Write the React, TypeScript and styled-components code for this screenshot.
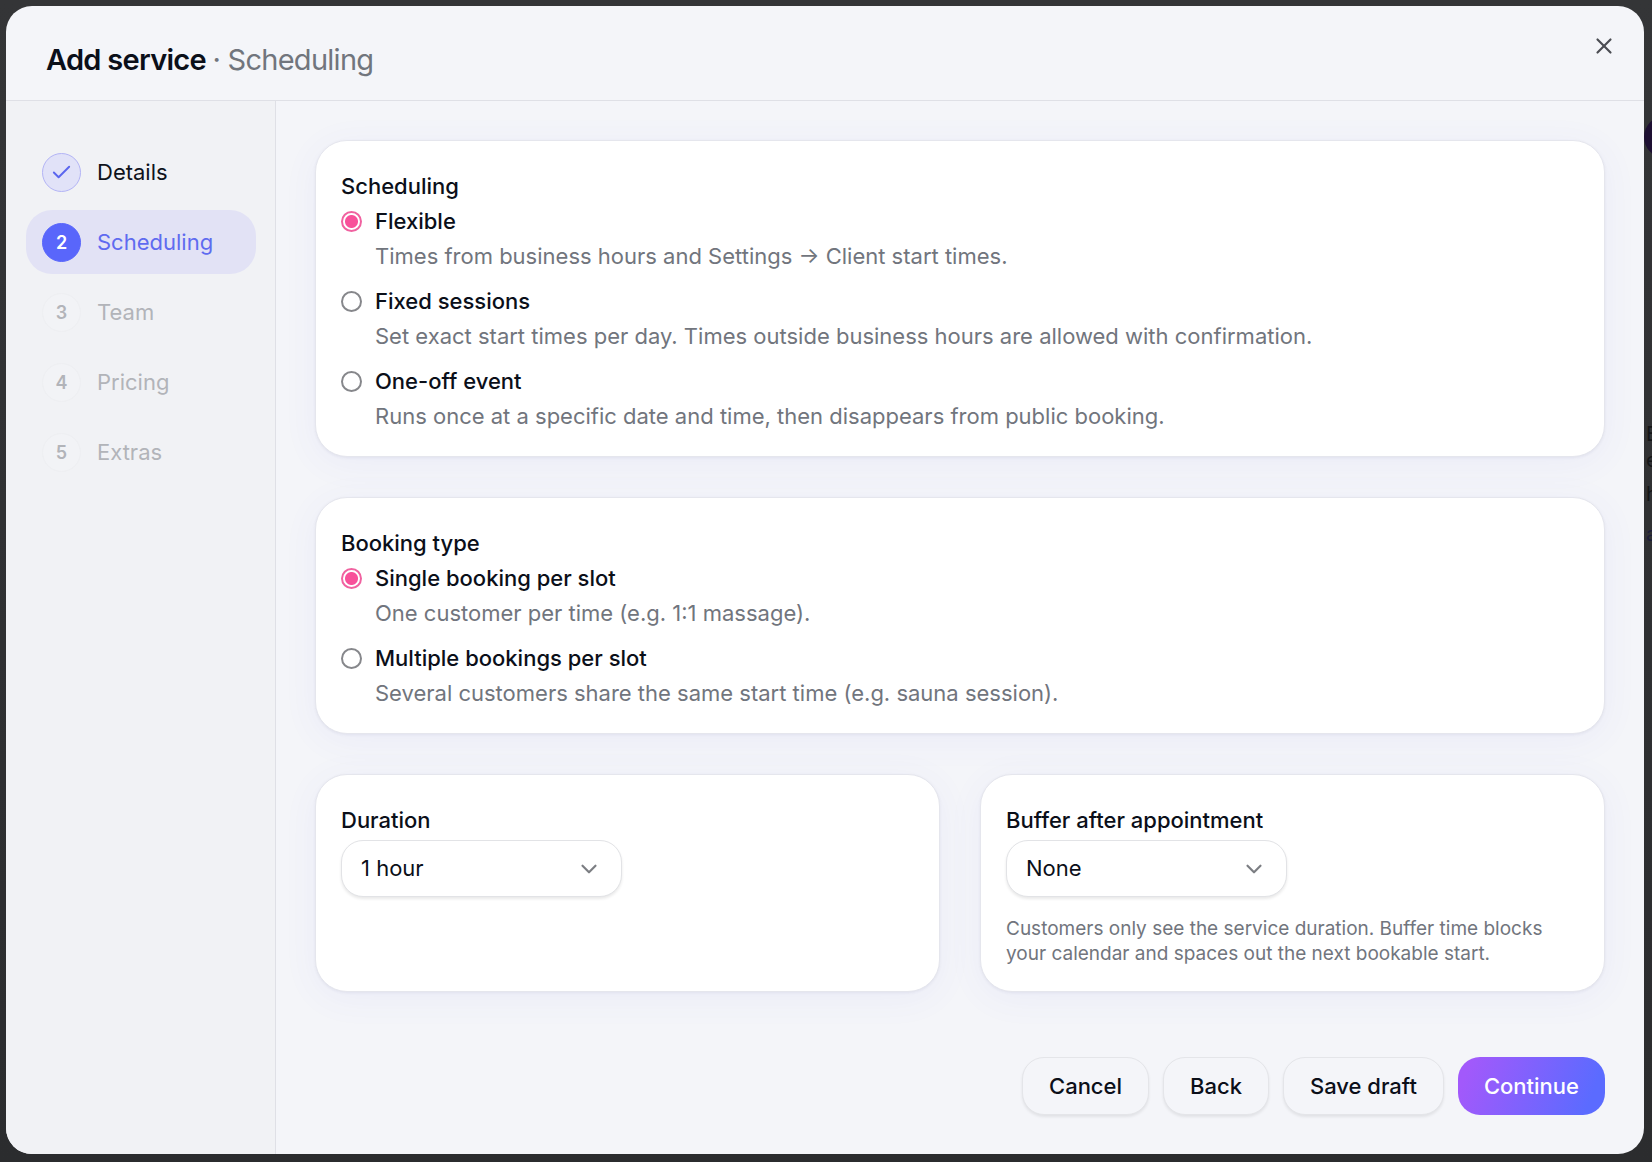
import React, { useState } from "react";
import styled, { createGlobalStyle, css } from "styled-components";
import { Check, ChevronDown, X } from "lucide-react";

const GlobalStyle = createGlobalStyle`
  *, *::before, *::after { box-sizing: border-box; }
  body {
    margin: 0;
    background: #303133;
    color: #0b0f19;
    font-family: Inter, "Liberation Sans", sans-serif;
    font-optical-sizing: none;
    font-size: 22px;
    line-height: 35px;
  }
  button, select, input { font: inherit; color: inherit; }
`;

const Backdrop = styled.div`
  display: grid;
  grid-template-columns: minmax(0, 1fr) 8px;
  min-height: 100vh;
  padding: 6px 0 8px 6px;
  background: linear-gradient(#343537, #2b2c2e);
`;

const PageEdge = styled.div`
  display: flex;
  flex-direction: column;
  overflow: hidden;
  padding-top: 110px;
  color: #151618;
  font-size: 20px;
  white-space: nowrap;
`;

const EdgeAvatar = styled.span`
  flex: none;
  width: 42px;
  height: 42px;
  margin-bottom: 259px;
  border-radius: 50%;
  background: #1e1033;
`;

const EdgeLine = styled.span<{ $height: number; $link?: boolean }>`
  flex: none;
  height: ${(p) => p.$height}px;
  padding-left: 2px;
  color: ${(p) => (p.$link ? "#1d1e3a" : "inherit")};
`;

const Dialog = styled.section`
  display: flex;
  flex-direction: column;
  overflow: hidden;
  border-radius: 26px;
  background: #f4f5f9;
`;

const Header = styled.header`
  display: flex;
  align-items: center;
  justify-content: space-between;
  height: 95px;
  flex: none;
  padding: 14px 24px 0 40px;
  border-bottom: 1px solid #dfe0e6;
`;

const Title = styled.h1`
  margin: 0;
  font-size: 29px;
  line-height: 40px;
  font-weight: 600;
  letter-spacing: -0.025em;

  span {
    color: #71757d;
    font-weight: 400;
  }
`;

const CloseButton = styled.button`
  display: grid;
  place-items: center;
  align-self: flex-start;
  width: 32px;
  height: 32px;
  margin-top: 10px;
  padding: 0;
  border: 0;
  background: none;
  color: #4b4d53;
  cursor: pointer;
`;

const Body = styled.div`
  display: grid;
  grid-template-columns: 270px minmax(0, 1fr);
  flex: 1;
`;

const Steps = styled.nav`
  display: flex;
  flex-direction: column;
  gap: 6px;
  padding: 39px 19px 39px 20px;
  border-right: 1px solid #dfe0e6;
  background: #f1f2f5;
`;

type StepState = "done" | "current" | "upcoming";

const Step = styled.button<{ $state: StepState }>`
  display: flex;
  align-items: center;
  gap: 16px;
  height: 64px;
  padding: 0 16px;
  border: 0;
  border-radius: 26px;
  background: ${(p) => (p.$state === "current" ? "#e2e2f5" : "none")};
  color: ${(p) =>
    p.$state === "current" ? "#5f6bf0" : p.$state === "done" ? "#0f131c" : "#b2b4b9"};
  text-align: left;
  cursor: pointer;
`;

const StepBadge = styled.span<{ $state: StepState }>`
  display: grid;
  place-items: center;
  flex: none;
  width: 39px;
  height: 39px;
  border: 1px solid #eeeff2;
  border-radius: 50%;
  background: #f2f3f6;
  font-size: 18px;
  font-weight: 600;
  ${(p) =>
    p.$state === "current" &&
    css`
      border-color: #5966fb;
      background: #5966fb;
      color: #fff;
    `}
  ${(p) =>
    p.$state === "done" &&
    css`
      border-color: #b3b4f5;
      background: #e1e2f8;
      color: #5b66ee;
    `}
`;

const Content = styled.form`
  display: flex;
  flex-direction: column;
  gap: 40px;
  padding: 39px;
`;

const cardStyle = css`
  margin: 0;
  min-width: 0;
  border: 1px solid #e5e6ed;
  border-radius: 32px;
  background: #fff;
  box-shadow: 0 1px 3px rgba(60, 60, 110, 0.07), 0 6px 36px rgba(90, 90, 220, 0.06);
`;

const Card = styled.div`
  ${cardStyle}
  padding: 28px 25px 22px;
`;

const FieldCard = styled.div`
  ${cardStyle}
  padding: 28px 25px 25px;
`;

const CardPair = styled.div`
  display: grid;
  grid-template-columns: repeat(2, minmax(0, 1fr));
  gap: 40px;
`;

const CardTitle = styled.h2`
  margin: 0;
  font-size: 22px;
  line-height: 35px;
  font-weight: 500;
`;

const Options = styled.div`
  display: flex;
  flex-direction: column;
  gap: 10px;
`;

const Option = styled.label`
  display: grid;
  grid-template-columns: 21px minmax(0, 1fr);
  column-gap: 13px;
  align-items: center;
  cursor: pointer;
`;

const OptionName = styled.span`
  font-weight: 500;
`;

const OptionText = styled.span`
  grid-column: 2;
  color: #71757d;
`;

const Radio = styled.input`
  appearance: none;
  width: 21px;
  height: 21px;
  margin: 0;
  border: 2px solid #86878b;
  border-radius: 50%;
  background: #fff;

  &:checked {
    border: 2px solid #f062a0;
    background: radial-gradient(circle, #f8509a 6px, #fff 7px);
  }
`;

const FieldLabel = styled.label`
  display: block;
  margin-bottom: 2px;
  font-weight: 500;
`;

const SelectBox = styled.div`
  display: grid;
  align-items: center;
  width: 281px;
  max-width: 100%;
  color: #7c7e83;

  > * {
    grid-area: 1 / 1;
  }

  > svg {
    justify-self: end;
    margin-right: 20px;
    pointer-events: none;
  }
`;

const Select = styled.select`
  appearance: none;
  width: 100%;
  height: 57px;
  padding: 0 48px 0 19px;
  border: 1px solid #e2e3e6;
  border-radius: 22px;
  background: #fff;
  box-shadow: 0 2px 3px rgba(0, 0, 0, 0.09);
  color: #0b0f19;
`;

const Hint = styled.p`
  margin: 19px 0 0;
  color: #71757d;
  font-size: 19px;
  line-height: 25px;
`;

const Actions = styled.div`
  display: flex;
  flex-wrap: wrap;
  justify-content: flex-end;
  gap: 14px;
  padding-top: 25px;
`;

const Button = styled.button<{ $primary?: boolean }>`
  height: 58px;
  padding: 0 26px;
  border: 1px solid #e4e5e9;
  border-radius: 22px;
  background: #f4f5f9;
  box-shadow: 0 2px 3px rgba(0, 0, 0, 0.08);
  font-weight: 500;
  cursor: pointer;
  ${(p) =>
    p.$primary &&
    css`
      border: 0;
      background: linear-gradient(110deg, #a259fb 8%, #5b6bff 88%);
      box-shadow: none;
      color: #fff;
    `}
`;

const steps: { name: string; state: StepState }[] = [
  { name: "Details", state: "done" },
  { name: "Scheduling", state: "current" },
  { name: "Team", state: "upcoming" },
  { name: "Pricing", state: "upcoming" },
  { name: "Extras", state: "upcoming" },
];

const scheduling = [
  ["Flexible", "Times from business hours and Settings → Client start times."],
  ["Fixed sessions", "Set exact start times per day. Times outside business hours are allowed with confirmation."],
  ["One-off event", "Runs once at a specific date and time, then disappears from public booking."],
];

const bookingTypes = [
  ["Single booking per slot", "One customer per time (e.g. 1:1 massage)."],
  ["Multiple bookings per slot", "Several customers share the same start time (e.g. sauna session)."],
];

function RadioCard({ title, name, options }: { title: string; name: string; options: string[][] }) {
  const [selected, setSelected] = useState(0);
  return (
    <Card role="radiogroup" aria-labelledby={`${name}-title`}>
      <CardTitle id={`${name}-title`}>{title}</CardTitle>
      <Options>
        {options.map(([label, text], i) => (
          <Option key={label}>
            <Radio type="radio" name={name} checked={selected === i} onChange={() => setSelected(i)} />
            <OptionName>{label}</OptionName>
            <OptionText>{text}</OptionText>
          </Option>
        ))}
      </Options>
    </Card>
  );
}

function SelectField({ id, label, options }: { id: string; label: string; options: string[] }) {
  return (
    <>
      <FieldLabel htmlFor={id}>{label}</FieldLabel>
      <SelectBox>
        <Select id={id}>
          {options.map((o) => (
            <option key={o}>{o}</option>
          ))}
        </Select>
        <ChevronDown size={26} strokeWidth={2} />
      </SelectBox>
    </>
  );
}

export default function App() {
  return (
    <>
      <GlobalStyle />
      <Backdrop>
        <Dialog role="dialog" aria-labelledby="dialog-title">
          <Header>
            <Title id="dialog-title">
              Add service <span>· Scheduling</span>
            </Title>
            <CloseButton type="button" aria-label="Close">
              <X size={26} strokeWidth={2} />
            </CloseButton>
          </Header>
          <Body>
            <Steps aria-label="Steps">
              {steps.map(({ name, state }, i) => (
                <Step key={name} type="button" $state={state} aria-current={state === "current" ? "step" : undefined}>
                  <StepBadge $state={state}>
                    {state === "done" ? <Check size={23} strokeWidth={2} /> : i + 1}
                  </StepBadge>
                  {name}
                </Step>
              ))}
            </Steps>
            <Content onSubmit={(e) => e.preventDefault()}>
              <RadioCard title="Scheduling" name="scheduling" options={scheduling} />
              <RadioCard title="Booking type" name="booking" options={bookingTypes} />
              <CardPair>
                <FieldCard>
                  <SelectField id="duration" label="Duration" options={["1 hour"]} />
                </FieldCard>
                <FieldCard>
                  <SelectField id="buffer" label="Buffer after appointment" options={["None"]} />
                  <Hint>
                    Customers only see the service duration. Buffer time blocks your calendar and spaces out the next
                    bookable start.
                  </Hint>
                </FieldCard>
              </CardPair>
              <Actions>
                <Button type="button">Cancel</Button>
                <Button type="button">Back</Button>
                <Button type="button">Save draft</Button>
                <Button type="submit" $primary>
                  Continue
                </Button>
              </Actions>
            </Content>
          </Body>
        </Dialog>
        <PageEdge aria-hidden="true">
          <EdgeAvatar />
          <EdgeLine $height={26}>E</EdgeLine>
          <EdgeLine $height={34}>el</EdgeLine>
          <EdgeLine $height={40}>h</EdgeLine>
          <EdgeLine $height={40} $link>a</EdgeLine>
        </PageEdge>
      </Backdrop>
    </>
  );
}
